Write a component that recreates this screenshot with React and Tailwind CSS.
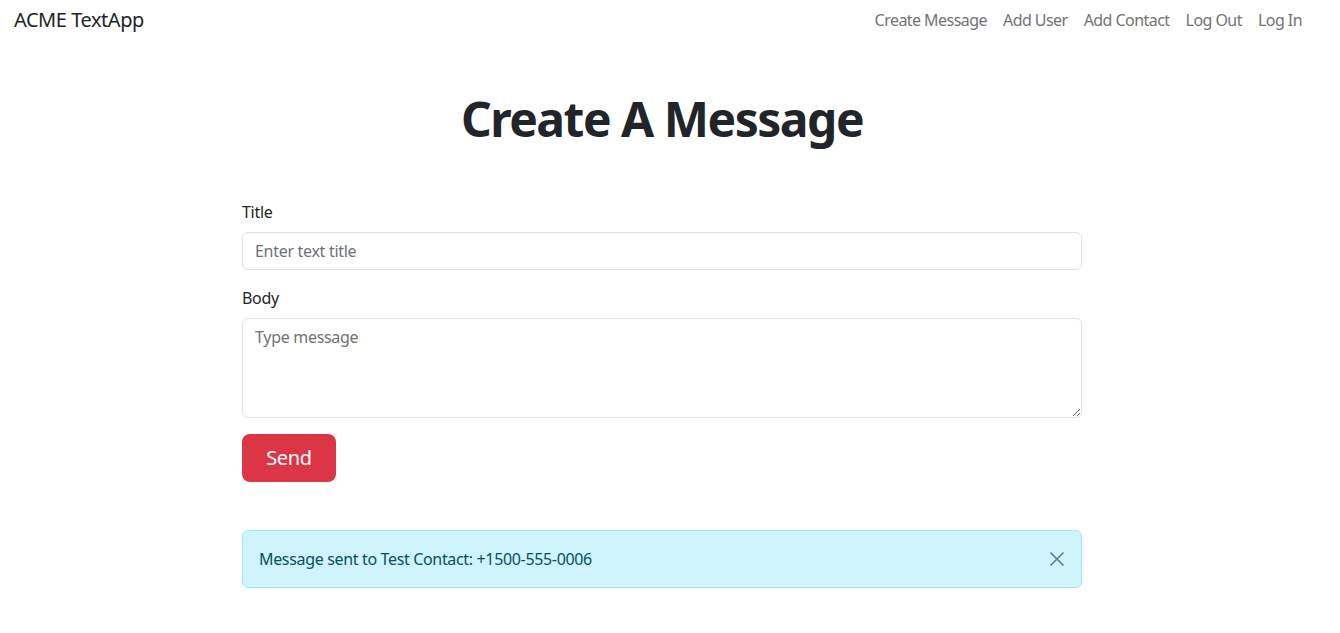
import React from "react";

export default function App() {
  const font = { fontFamily: '"Noto Sans", "Open Sans", sans-serif' };
  return (
    <div className="min-h-screen bg-white text-[#212529]" style={font}>
      <div className="w-[1324px]">
        <nav className="flex items-center justify-between px-[14px] h-[40px]">
          <a className="text-[20px] leading-[30px] text-[#212529] tracking-[-0.45px]">ACME TextApp</a>
          <ul className="flex items-center">
            {["Create Message", "Add User", "Add Contact", "Log Out", "Log In"].map((l) => (
              <li key={l}>
                <a className="block px-[8px] py-[8px] text-[16px] leading-[24px] text-[#737373] tracking-[-0.55px]">{l}</a>
              </li>
            ))}
          </ul>
        </nav>

        <main className="w-[840px] mx-auto">
          <h1 className="text-center text-[48px] leading-[58px] font-bold mt-[50px] mb-[52px] tracking-[-1.5px]">
            Create A Message
          </h1>
          <form>
            <div className="mb-[16px]">
              <label className="block text-[16px] leading-[24px] mb-[8px] tracking-[-0.3px]">Title</label>
              <input
                type="text"
                placeholder="Enter text title"
                className="block w-full h-[38px] px-[12px] text-[16px] tracking-[-0.3px] border border-[#dee2e6] rounded-[6px] placeholder:text-[#6f7276] outline-none"
              />
            </div>
            <div className="mb-[16px]">
              <label className="block text-[16px] leading-[24px] mb-[8px] tracking-[-0.3px]">Body</label>
              <textarea
                placeholder="Type message"
                className="block w-full h-[100px] px-[12px] py-[6px] text-[16px] leading-[24px] tracking-[-0.3px] border border-[#dee2e6] rounded-[6px] placeholder:text-[#6f7276] outline-none"
              />
            </div>
            <button
              type="button"
              className="h-[48px] w-[94px] rounded-[8px] bg-[#dc3545] text-white text-[20px] leading-[30px] tracking-[-0.3px]"
            >
              Send
            </button>
          </form>

          <div className="mt-[48px] relative h-[58px] flex items-center px-[16px] bg-[#cff4fc] border border-[#9eeaf9] rounded-[6px] text-[#055160] text-[16px] leading-[24px] tracking-[-0.34px]">
            Message sent to Test Contact: +1500-555-0006
            <button type="button" className="absolute right-[16px] top-[20px] w-[16px] h-[16px] opacity-50">
              <svg viewBox="0 0 16 16" width="16" height="16">
                <path d="M1.5 1.5 L14.5 14.5 M14.5 1.5 L1.5 14.5" stroke="#000" strokeWidth="1.6" fill="none" />
              </svg>
            </button>
          </div>
        </main>
      </div>
    </div>
  );
}
